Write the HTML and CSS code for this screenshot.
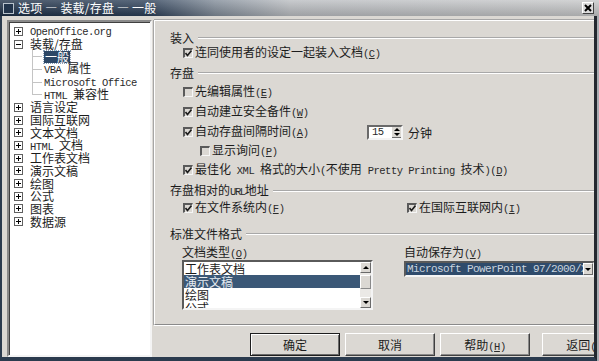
FILE: index.html
```html
<!DOCTYPE html>
<html lang="zh-CN">
<head>
    <meta charset="UTF-8">
    <title>选项 - 装载/存盘 - 一般</title>
    <link rel="stylesheet" href="styles.css">
</head>
<body>
<div class="window">
    <!-- barra de titulo -->
    <div class="titlebar">
        <span class="app-icon"></span>
        <span class="title">选项 — 装载/存盘 — 一般</span>
        <span class="close">
            <svg width="8" height="8" viewBox="0 0 8 8"><path d="M1 1 L7 7 M7 1 L1 7" stroke="#000" stroke-width="2"/></svg>
        </span>
    </div>

    <div class="main">
        <!-- arvore de opcoes -->
        <ul class="tree">
            <li><span class="exp plus"></span><span class="lbl"><span class="en">OpenOffice.org</span></span></li>
            <li><span class="exp"></span><span class="lbl">装载/存盘</span></li>
            <li class="child"><span class="branch"></span><span class="lbl sel">一般</span></li>
            <li class="child"><span class="branch"></span><span class="lbl"><span class="en">VBA </span>属性</span></li>
            <li class="child"><span class="branch"></span><span class="lbl"><span class="en">Microsoft Office</span></span></li>
            <li class="child last"><span class="branch"></span><span class="lbl"><span class="en">HTML </span>兼容性</span></li>
            <li><span class="exp plus"></span><span class="lbl">语言设定</span></li>
            <li><span class="exp plus"></span><span class="lbl">国际互联网</span></li>
            <li><span class="exp plus"></span><span class="lbl">文本文档</span></li>
            <li><span class="exp plus"></span><span class="lbl"><span class="en">HTML </span>文档</span></li>
            <li><span class="exp plus"></span><span class="lbl">工作表文档</span></li>
            <li><span class="exp plus"></span><span class="lbl">演示文稿</span></li>
            <li><span class="exp plus"></span><span class="lbl">绘图</span></li>
            <li><span class="exp plus"></span><span class="lbl">公式</span></li>
            <li><span class="exp plus"></span><span class="lbl">图表</span></li>
            <li><span class="exp plus"></span><span class="lbl">数据源</span></li>
        </ul>

        <div class="side">
            <div class="page">
                <div class="group-title"><span class="lbl">装入</span></div>
                <div class="row r18">
                    <span class="cb on"><svg viewBox="0 0 7 7"><path d="M0.5 3 L2.5 5.5 L6.5 0.5"/></svg></span>
                    <span class="lbl">连同使用者的设定一起装入文档<span class="en">(<u>C</u>)</span></span>
                </div>

                <div class="group-title mt4"><span class="lbl">存盘</span></div>
                <div class="rows">
                    <div class="row r20">
                        <span class="cb"></span>
                        <span class="lbl">先编辑属性<span class="en">(<u>E</u>)</span></span>
                    </div>
                    <div class="row r20">
                        <span class="cb on"><svg viewBox="0 0 7 7"><path d="M0.5 3 L2.5 5.5 L6.5 0.5"/></svg></span>
                        <span class="lbl">自动建立安全备件<span class="en">(<u>W</u>)</span></span>
                    </div>
                    <div class="row r20">
                        <span class="cb on"><svg viewBox="0 0 7 7"><path d="M0.5 3 L2.5 5.5 L6.5 0.5"/></svg></span>
                        <span class="lbl lbl-fixed">自动存盘间隔时间<span class="en">(<u>A</u>)</span></span>
                        <span class="spin">
                            <span class="spin-val en">15</span>
                            <span class="spin-btns"><span class="tri-up"></span><span class="tri-down"></span></span>
                        </span>
                        <span class="lbl">分钟</span>
                    </div>
                    <div class="row r18 indent">
                        <span class="cb"></span>
                        <span class="lbl">显示询问<span class="en">(<u>P</u>)</span></span>
                    </div>
                    <div class="row r19">
                        <span class="cb on"><svg viewBox="0 0 7 7"><path d="M0.5 3 L2.5 5.5 L6.5 0.5"/></svg></span>
                        <span class="lbl">最佳化<span class="en"> XML </span>格式的大小<span class="en">(</span>不使用<span class="en"> Pretty Printing </span>技术<span class="en">)(<u>D</u>)</span></span>
                    </div>
                </div>

                <div class="group-title mt5"><span class="lbl">存盘相对的<span class="en tight">URL</span>地址</span></div>
                <div class="row r20 mt1">
                    <span class="col-a">
                        <span class="cb on"><svg viewBox="0 0 7 7"><path d="M0.5 3 L2.5 5.5 L6.5 0.5"/></svg></span>
                        <span class="lbl">在文件系统内<span class="en">(<u>F</u>)</span></span>
                    </span>
                    <span class="cb on"><svg viewBox="0 0 7 7"><path d="M0.5 3 L2.5 5.5 L6.5 0.5"/></svg></span>
                    <span class="lbl">在国际互联网内<span class="en">(<u>I</u>)</span></span>
                </div>

                <div class="group-title mt9"><span class="lbl">标准文件格式</span></div>
                <div class="formats">
                    <div class="fcol">
                        <div class="flabel">文档类型<span class="en">(<u>O</u>)</span></div>
                        <div class="listbox">
                            <div class="items">
                                <div class="item">工作表文档</div>
                                <div class="item picked">演示文稿</div>
                                <div class="item">绘图</div>
                                <div class="item">公式</div>
                            </div>
                            <div class="scroll">
                                <span class="sbtn"><span class="tri-up"></span></span>
                                <span class="track"><span class="thumb"></span></span>
                                <span class="sbtn"><span class="tri-down"></span></span>
                            </div>
                        </div>
                    </div>
                    <div class="fcol">
                        <div class="flabel">自动保存为<span class="en">(<u>V</u>)</span></div>
                        <div class="combo">
                            <span class="combo-text en">Microsoft PowerPoint 97/2000/XP</span>
                            <span class="combo-btn"><span class="tri-down"></span></span>
                        </div>
                    </div>
                </div>
            </div>

            <div class="buttons">
                <button class="btn default">确定</button>
                <button class="btn">取消</button>
                <button class="btn">帮助<span class="en">(<u>H</u>)</span></button>
                <button class="btn back">返回<span class="en">(<u>R</u>)</span></button>
            </div>
        </div>
    </div>
</div>
</body>
</html>
```

FILE: styles.css
```css
* {
    box-sizing: border-box;
}

body {
    margin: 0;
    width: 599px;
    height: 361px;
    overflow: hidden;
    font-family: "Noto Sans CJK SC", sans-serif;
    font-size: 12px;
    color: #1c1c1c;
    background: #a9adb2;
}

.en {
    font-family: "Liberation Mono", monospace;
    font-size: 10.5px;
    letter-spacing: -0.5px;
    color: #2a2a2a;
}

.en.tight {
    letter-spacing: -1.4px;
}

.lbl {
    white-space: pre;
    line-height: 13px;
}

.window {
    width: 599px;
    height: 361px;
    display: flex;
    flex-direction: column;
}

/* barra de titulo */
.titlebar {
    height: 16px;
    flex: none;
    display: flex;
    align-items: center;
    padding: 0 5px 0 3px;
    color: #fff;
    background:
        linear-gradient(to bottom, rgba(255, 255, 255, 0.22), rgba(0, 0, 0, 0.15)),
        linear-gradient(to right, #1c2e45 0, #2b3e57 150px, #7f8a97 215px, #b9bcc0 290px, #c6c7c8 100%);
}

.app-icon {
    width: 11px;
    height: 11px;
    border: 1px solid #b8c2cc;
    background: #22344b;
    margin-right: 4px;
}

.title {
    flex: 1;
    line-height: 16px;
    letter-spacing: 0.2px;
}

.close {
    width: 12px;
    height: 12px;
    display: flex;
    align-items: center;
    justify-content: center;
    background: #dcdcdc;
    border: 1px solid;
    border-color: #fff #404040 #404040 #fff;
}

/* corpo */
.main {
    flex: 1;
    display: flex;
    margin-right: 2px;
    padding: 4px 0 0 5px;
    background: #dbd8d3;
    border-left: 2px solid #2b3b4e;
    border-right: 3px solid #23282f;
    border-bottom: 4px solid #2b3b4e;
    overflow: hidden;
}

.tree {
    width: 145px;
    flex: none;
    margin: 0;
    padding: 3px 0 0 0;
    list-style: none;
    background: #fff;
    border: 2px solid;
    border-color: #8a8a8a #f4f4f4 #f4f4f4 #8a8a8a;
    box-shadow: inset 1px 1px #404040;
}

.tree li {
    height: 12.7px;
    display: flex;
    align-items: center;
    padding-left: 5px;
    white-space: nowrap;
}

.tree .lbl {
    line-height: 12px;
}

.exp {
    width: 9px;
    height: 9px;
    flex: none;
    margin-right: 7px;
    border: 1px solid #606060;
    background: linear-gradient(#000, #000) center / 5px 1px no-repeat, #fff;
}

.exp.plus {
    background:
        linear-gradient(#000, #000) center / 5px 1px no-repeat,
        linear-gradient(#000, #000) center / 1px 5px no-repeat,
        #fff;
}

.tree li.child {
    padding-left: 23px;
}

.branch {
    width: 10px;
    height: 100%;
    flex: none;
    margin-right: 2px;
    background:
        linear-gradient(#c4c4c4, #c4c4c4) left top / 1px 100% no-repeat,
        linear-gradient(#c4c4c4, #c4c4c4) left center / 100% 1px no-repeat;
}

.tree li.last .branch {
    background:
        linear-gradient(#c4c4c4, #c4c4c4) left top / 1px 50% no-repeat,
        linear-gradient(#c4c4c4, #c4c4c4) left center / 100% 1px no-repeat;
}

.sel {
    background: #2c4766;
    color: #fff;
    padding: 0 1px;
    outline: 1px dotted #8aa0b8;
}

/* painel da direita */
.side {
    flex: none;
    width: 470px;
    margin-left: 2px;
    display: flex;
    flex-direction: column;
}

.page {
    height: 305px;
    flex: none;
    padding: 10px 0 0 15px;
    border-top: 1px solid #fff;
    border-left: 1px solid #fff;
    border-bottom: 1px solid #8a8a8a;
    box-shadow: 0 -1px #a6a6a6, -1px 0 #a6a6a6, 0 1px #fff;
}

.group-title {
    height: 13px;
    display: flex;
    align-items: center;
    white-space: nowrap;
}

.group-title::after {
    content: "";
    flex: 1;
    margin-left: 4px;
    border-top: 1px solid #a8a8a8;
    border-bottom: 1px solid #fff;
}

.mt1 { margin-top: 1px; }
.mt4 { margin-top: 4px; }
.mt5 { margin-top: 5px; }
.mt9 { margin-top: 9px; }

.rows {
    margin-top: 3px;
}

.row {
    display: flex;
    align-items: center;
    padding-left: 13px;
    white-space: nowrap;
}

.r18 { height: 18px; }
.r19 { height: 19px; }
.r20 { height: 20px; }

.row.indent {
    padding-left: 30px;
}

.cb {
    width: 10px;
    height: 10px;
    flex: none;
    margin-right: 2px;
    border-top: 2px solid #5a5a5a;
    border-left: 2px solid #5a5a5a;
    border-right: 1px solid #f6f6f6;
    border-bottom: 1px solid #f6f6f6;
    display: flex;
}

.cb svg {
    width: 7px;
    height: 7px;
}

.cb svg path {
    fill: none;
    stroke: #1a1a1a;
    stroke-width: 1.6;
}

.lbl-fixed {
    width: 172px;
    flex: none;
}

.spin {
    width: 36px;
    height: 15px;
    flex: none;
    display: flex;
    margin-right: 5px;
    background: #fff;
    border: 2px solid;
    border-color: #6a6a6a #f4f4f4 #f4f4f4 #6a6a6a;
}

.spin-val {
    flex: 1;
    padding-left: 3px;
    line-height: 11px;
}

.spin-btns {
    width: 10px;
    display: flex;
    flex-direction: column;
    align-items: center;
    justify-content: space-around;
    background: #dbd8d3;
    border-left: 1px solid #fff;
    box-shadow: inset 0 -1px #6a6a6a;
}

.tri-up {
    width: 0;
    height: 0;
    border-left: 3px solid transparent;
    border-right: 3px solid transparent;
    border-bottom: 3px solid #000;
}

.tri-down {
    width: 0;
    height: 0;
    border-left: 3px solid transparent;
    border-right: 3px solid transparent;
    border-top: 3px solid #000;
}

.col-a {
    width: 224px;
    flex: none;
    display: flex;
    align-items: center;
}

/* formatos */
.formats {
    display: flex;
    padding-left: 12px;
}

.fcol:first-child {
    width: 222px;
}

.flabel {
    height: 13px;
    line-height: 13px;
    margin-top: 5px;
    white-space: nowrap;
}

.listbox {
    width: 191px;
    height: 50px;
    margin-top: 2px;
    display: flex;
    background: #fff;
    border: 2px solid;
    border-color: #5a5a5a #f4f4f4 #f4f4f4 #5a5a5a;
}

.items {
    flex: 1;
    overflow: hidden;
}

.item {
    height: 13px;
    line-height: 13px;
    padding-left: 1px;
    white-space: nowrap;
}

.item.picked {
    background: #3b5877;
    color: #e6ebf0;
}

.scroll {
    width: 11px;
    display: flex;
    flex-direction: column;
    background: #ebe9e6;
}

.sbtn {
    height: 11px;
    flex: none;
    display: flex;
    align-items: center;
    justify-content: center;
    background: #dbd8d3;
    border: 1px solid;
    border-color: #fff #6a6a6a #6a6a6a #fff;
}

.track {
    flex: 1;
    padding-top: 2px;
}

.thumb {
    display: block;
    height: 14px;
    background: #dbd8d3;
    border: 1px solid;
    border-color: #fff #8a8a8a #8a8a8a #fff;
}

.combo {
    width: 191px;
    height: 16px;
    margin-top: 3px;
    display: flex;
    background: #fff;
    border: 2px solid;
    border-color: #5a5a5a #f4f4f4 #f4f4f4 #5a5a5a;
}

.combo-text {
    flex: 1;
    padding-left: 1px;
    background: #2f4b6b;
    color: #c9d3de;
    line-height: 12px;
    font-size: 11px;
    letter-spacing: -0.6px;
    white-space: nowrap;
    overflow: hidden;
}

.combo-btn {
    width: 10px;
    flex: none;
    display: flex;
    align-items: center;
    justify-content: center;
    background: #dbd8d3;
    border: 1px solid;
    border-color: #fff #6a6a6a #6a6a6a #fff;
}

/* botoes */
.buttons {
    display: flex;
    gap: 5px;
    margin-top: 8px;
    padding-left: 96px;
}

.btn {
    width: 90px;
    height: 23px;
    flex: none;
    padding: 0;
    font-family: "Noto Sans CJK SC", sans-serif;
    font-size: 12px;
    color: #1c1c1c;
    background: #dbd8d3;
    border: 1px solid;
    border-color: #fff #404040 #404040 #fff;
    box-shadow: inset -1px -1px #8a8a8a;
}

.btn.default {
    border-color: #1e1e1e;
    box-shadow: inset 1px 1px #fff, inset -1px -1px #6a6a6a;
}

.btn.back {
    margin-left: 7px;
}
```
